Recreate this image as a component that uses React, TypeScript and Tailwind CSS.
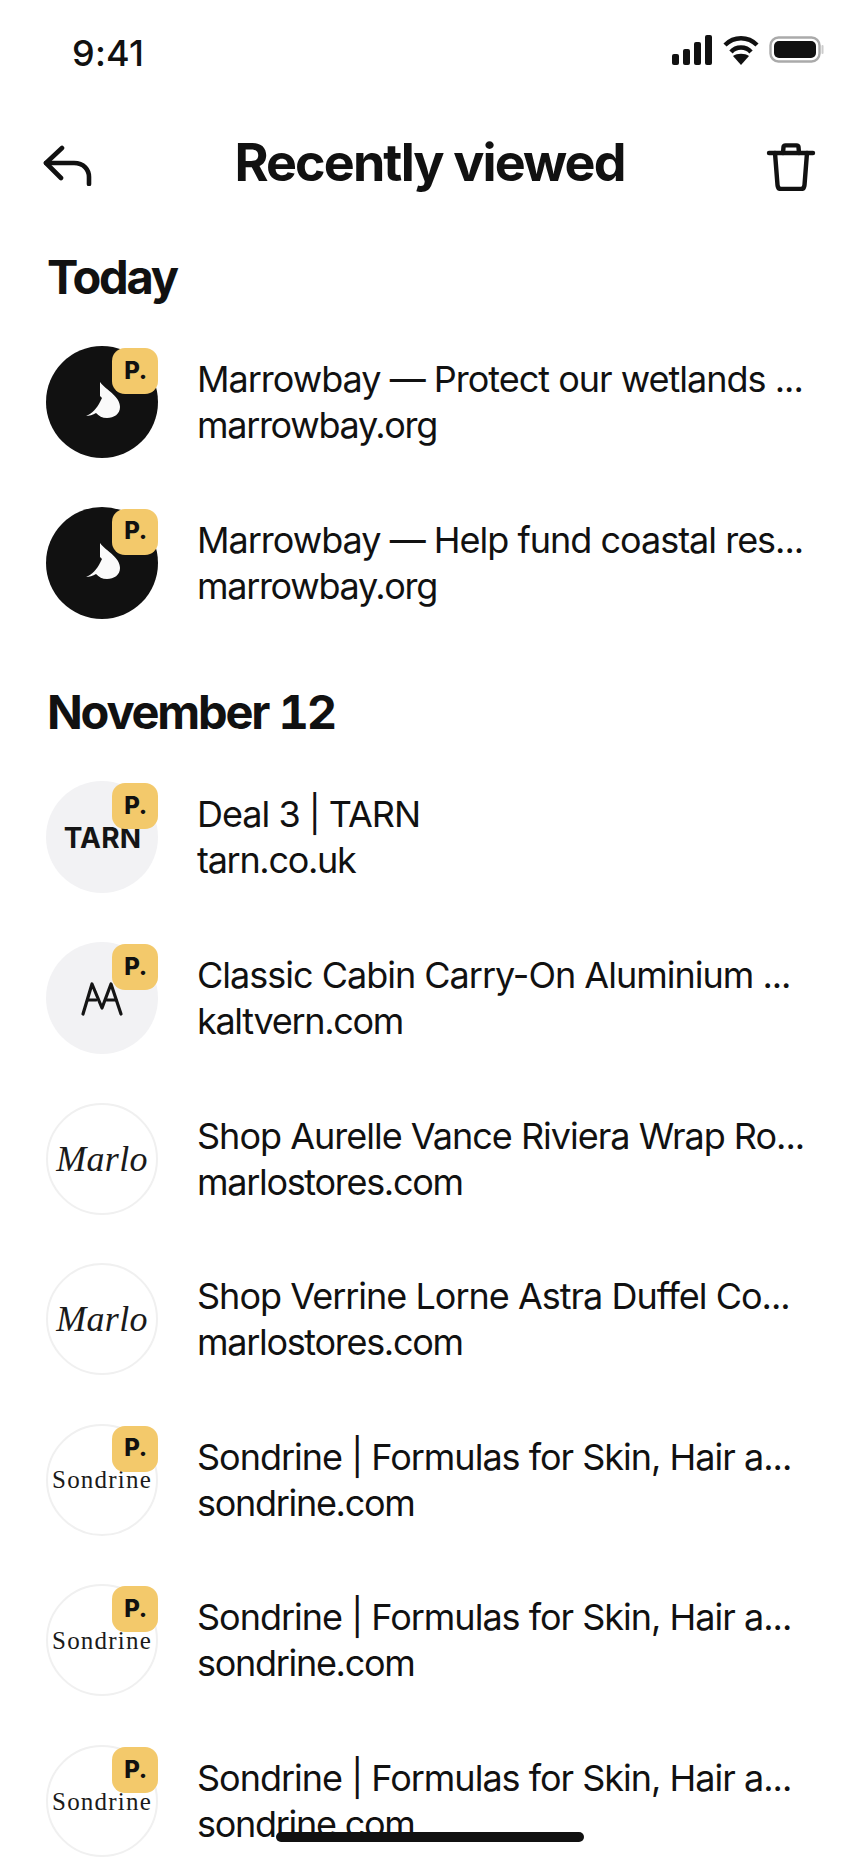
const font = { fontFamily: 'Inter, "Liberation Sans", sans-serif' };

function Badge() {
  return (
    <span className="absolute right-0 top-[2px] flex h-[46px] w-[46px] items-center justify-center rounded-[13px] bg-[#f3c96b] pb-[1px] pl-[1px] text-[24px] leading-none font-extrabold tracking-[-0.3px] text-[#111]">
      P.
    </span>
  );
}

function Logo({ kind }: { kind: string }) {
  if (kind === 'marrowbay') {
    return (
      <div className="flex h-full w-full items-center justify-center rounded-full bg-[#111]">
        <svg width="112" height="112" viewBox="0 0 112 112">
          <path d="M54 36 C61 45 74 50 74 61 C74 68 68 72 61 72 C56 72 53 70 50 67 C47 69 43 70 40 70 C46 68 51 62 54 56 L56 52 L54 50 Z" fill="#fafafa" />
        </svg>
      </div>
    );
  }
  if (kind === 'tarn') {
    return (
      <div className="flex h-full w-full items-center justify-center rounded-full bg-[#f2f2f4] pt-[2px] pl-[1px] text-[28px] leading-none font-bold tracking-[0.2px] text-[#151515]">
        TARN
      </div>
    );
  }
  if (kind === 'kaltvern') {
    return (
      <div className="flex h-full w-full items-center justify-center rounded-full bg-[#f2f2f4]">
        <svg width="112" height="112" viewBox="0 0 112 112" fill="none" stroke="#151515" strokeWidth="3.2" strokeLinecap="round" strokeLinejoin="round">
          <path d="M37 72 L46 42 L56 66 L65 42 L75 72" />
          <path d="M42 58 L50 58 M61 58 L70 58" />
        </svg>
      </div>
    );
  }
  if (kind === 'marlo') {
    return (
      <div className="flex h-full w-full items-center justify-center rounded-full border-2 border-[#f0f0f0] bg-white text-[36px] leading-none tracking-[0.3px] text-[#1a1a1a] italic" style={{ fontFamily: '"Liberation Serif", serif' }}>
        Marlo
      </div>
    );
  }
  return (
    <div className="flex h-full w-full items-center justify-center rounded-full border-2 border-[#f0f0f0] bg-white text-[25px] leading-none tracking-[1.2px] text-[#1a1a1a]" style={{ fontFamily: '"Liberation Serif", serif' }}>
      Sondrine
    </div>
  );
}

function Row({ kind, badge, title, url }: { kind: string; badge: boolean; title: string; url: string }) {
  return (
    <div className="flex h-[160.6px] items-center pl-[46px]">
      <div className="relative h-[112px] w-[112px] shrink-0">
        <Logo kind={kind} />
        {badge && <Badge />}
      </div>
      <div className="ml-[39px] whitespace-nowrap text-[36px] leading-[46px] text-[#111]">
        <p className="tracking-[-1px]">{title}</p>
        <p className="tracking-[-1.3px]">{url}</p>
      </div>
    </div>
  );
}

function Heading({ children }: { children: string }) {
  return <h2 className="pl-[47px] text-[47px] leading-[56px] font-bold tracking-[-2.2px] text-[#111] tabular-nums">{children}</h2>;
}

const today = [
  { kind: 'marrowbay', badge: true, title: 'Marrowbay — Protect our wetlands ...', url: 'marrowbay.org' },
  { kind: 'marrowbay', badge: true, title: 'Marrowbay — Help fund coastal res...', url: 'marrowbay.org' },
];

const november = [
  { kind: 'tarn', badge: true, title: 'Deal 3 | TARN', url: 'tarn.co.uk' },
  { kind: 'kaltvern', badge: true, title: 'Classic Cabin Carry-On Aluminium ...', url: 'kaltvern.com' },
  { kind: 'marlo', badge: false, title: 'Shop Aurelle Vance Riviera Wrap Ro...', url: 'marlostores.com' },
  { kind: 'marlo', badge: false, title: 'Shop Verrine Lorne Astra Duffel Co...', url: 'marlostores.com' },
  { kind: 'sondrine', badge: true, title: 'Sondrine | Formulas for Skin, Hair a...', url: 'sondrine.com' },
  { kind: 'sondrine', badge: true, title: 'Sondrine | Formulas for Skin, Hair a...', url: 'sondrine.com' },
  { kind: 'sondrine', badge: true, title: 'Sondrine | Formulas for Skin, Hair a...', url: 'sondrine.com' },
];

export default function App() {
  return (
    <div className="relative h-[1864px] w-[860px] overflow-hidden bg-white text-[#111]" style={font}>
      <div className="flex h-[106px] items-start justify-between pt-[32px] pl-[72px] pr-[35px]">
        <span className="text-[36px] leading-[42px] font-medium tracking-[0.2px]">9:41</span>
        <div className="flex items-center gap-[10px] pt-[2px]">
          <svg width="42" height="32" viewBox="0 0 42 32" fill="#111">
            <rect x="1" y="20" width="7" height="11" rx="2" />
            <rect x="12" y="15" width="7" height="16" rx="2" />
            <rect x="23" y="8" width="7" height="23" rx="2" />
            <rect x="34" y="1" width="7" height="30" rx="2" />
          </svg>
          <svg width="36" height="30" viewBox="0 0 36 30" fill="none" stroke="#111" strokeWidth="4.4">
            <path d="M2 10 C11 1 25 1 34 10" />
            <path d="M8 17 C13 11 23 11 28 17" />
            <path d="M10 21 L18 30 L26 21 C22 18 14 18 10 21Z" fill="#111" stroke="none" />
          </svg>
          <svg width="56" height="28" viewBox="0 0 56 28" fill="none">
            <rect x="1.5" y="1.5" width="49" height="24" rx="8" stroke="#aaa" strokeWidth="2.4" />
            <rect x="5" y="5" width="42" height="17" rx="5" fill="#111" />
            <path d="M53.5 10 V17" stroke="#ccc" strokeWidth="2" strokeLinecap="round" />
          </svg>
        </div>
      </div>

      <div className="flex h-[114px] items-center justify-between pl-[43px] pr-[44px]">
        <svg width="50" height="46" viewBox="0 0 50 46" fill="none" stroke="#111" strokeWidth="4.6" strokeLinecap="round" strokeLinejoin="round">
          <path d="M19 8 L3 23 L18 38" />
          <path d="M3 23 L31 23 C41 23 46 30 46 37 L46 44" />
        </svg>
        <h1 className="text-[52px] leading-[60px] font-bold tracking-[-1.9px]">Recently viewed</h1>
        <svg className="mt-[8px]" width="50" height="48" viewBox="0 0 50 48" fill="none" stroke="#111" strokeWidth="4.4" strokeLinecap="round" strokeLinejoin="round">
          <path d="M3 10 L47 10" />
          <path d="M17 10 L17.5 4 C17.6 3 18.4 2.4 19.5 2.4 L30.5 2.4 C31.6 2.4 32.4 3 32.5 4 L33 10" />
          <path d="M9 10 L11.5 42 C11.7 44.5 13 46 15 46 L35 46 C37 46 38.3 44.5 38.5 42 L41 10" />
        </svg>
      </div>

      <div className="pt-[29px]">
        <Heading>Today</Heading>
      </div>
      <div className="pt-[17px]">
        {today.map((r, i) => (
          <Row key={i} {...r} />
        ))}
      </div>
      <div className="pt-[41px]">
        <Heading>November 12</Heading>
      </div>
      <div className="pt-[17px]">
        {november.map((r, i) => (
          <Row key={i} {...r} />
        ))}
      </div>

      <div className="absolute bottom-[22px] left-[276px] h-[10px] w-[308px] rounded-full bg-[#111]" />
    </div>
  );
}
